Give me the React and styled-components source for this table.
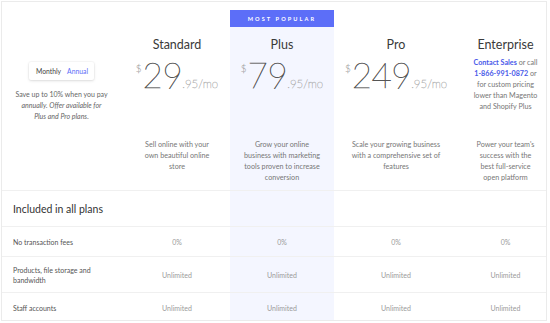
import React from "react";
import styled, { createGlobalStyle, css } from "styled-components";

const Global = createGlobalStyle`
  html, body { margin: 0; padding: 0; background: #fff; }
  body { font-family: Lato, "Open Sans", sans-serif; -webkit-font-smoothing: antialiased; }
`;

const COLS = "122px 106px 104px 124px 1fr";

const Frame = styled.div`
  box-sizing: border-box;
  width: 546px;
  height: 320px;
  margin: 1px 0 0 1px;
  border: 1px solid #ebebeb;
  padding-top: 8px;
  overflow: hidden;
`;

const Row = styled.div`
  display: grid;
  grid-template-columns: ${COLS};
  height: ${(p) => p.$h}px;
  border-bottom: 1px solid #f0f0f0;
  box-sizing: border-box;
`;

const Cell = styled.div`
  display: flex;
  align-items: center;
  justify-content: center;
  text-align: center;
  font-size: 7px;
  color: #9a9a9a;
  ${(p) => p.$hl && css`background: #f4f6ff;`}
  ${(p) => p.$last && css`padding-left: 7px;`}
`;

const LabelCell = styled.div`
  display: flex;
  align-items: center;
  padding-left: 11px;
  font-size: 7px;
  line-height: 10px;
  color: #555;
`;

const LabelText = styled.span`
  max-width: ${(p) => p.$w || 200}px;
`;

const SectionTitle = styled.div`
  display: flex;
  align-items: center;
  padding-left: 11px;
  font-size: 10.5px;
  color: #333;
`;

const IntroCell = styled.div`
  display: flex;
  flex-direction: column;
  align-items: center;
  padding-top: 52px;
  padding-right: 3px;
`;

const Toggle = styled.div`
  display: flex;
  align-items: center;
  gap: 6px;
  height: 18px;
  padding: 0 6px 0 7px;
  background: #fff;
  border-radius: 2px;
  box-shadow: 0 1px 3px rgba(0, 0, 0, 0.12), 0 0 0 1px rgba(0, 0, 0, 0.025);
  font-size: 6.8px;
`;

const ToggleOpt = styled.span`
  color: ${(p) => (p.$active ? "#5c6ef8" : "#444")};
`;

const IntroText = styled.p`
  margin: 9px 0 0;
  font-size: 7px;
  line-height: 11px;
  color: #666;
  text-align: center;
  em { font-style: italic; }
`;

const PlanCell = styled.div`
  display: flex;
  flex-direction: column;
  align-items: center;
  text-align: center;
  ${(p) => p.$hl && css`background: #f4f6ff;`}
  ${(p) => p.$last && css`padding-left: 7px;`}
`;

const BadgeSlot = styled.div`
  height: 17px;
  align-self: stretch;
  display: flex;
  align-items: center;
  justify-content: center;
  background: ${(p) => (p.$on ? "#5c6ef8" : "transparent")};
`;

const Badge = styled.span`
  color: #fff;
  font-size: 5.6px;
  font-weight: 700;
  letter-spacing: 2.1px;
`;

const PlanName = styled.div`
  margin-top: 10px;
  font-size: 12.5px;
  line-height: 16px;
  color: #3a3a3a;
`;

const PriceArea = styled.div`
  height: 86px;
  padding-top: 4px;
  box-sizing: border-box;
`;

const Price = styled.div`
  display: flex;
  align-items: flex-start;
`;

const Dollar = styled.span`
  font-size: 10px;
  font-weight: 100;
  -webkit-text-stroke: 0.3px #999;
  line-height: 1;
  margin-top: 6px;
  margin-right: 1px;
  color: #999;
`;

const Amount = styled.span`
  font-size: 35px;
  font-weight: 100;
  -webkit-text-stroke: 0.45px #555;
  line-height: 34px;
  letter-spacing: -0.5px;
  color: #555;
`;

const Cents = styled.span`
  align-self: flex-end;
  font-size: 11.5px;
  font-weight: 100;
  -webkit-text-stroke: 0.35px #aaa;
  line-height: 1;
  margin-bottom: 2px;
  color: #aaa;
`;

const Contact = styled.p`
  margin: 0;
  font-size: 7.2px;
  line-height: 11px;
  color: #777;
  a { color: #4959e9; font-weight: 700; text-decoration: none; }
`;

const Desc = styled.p`
  margin: 0;
  font-size: 7.2px;
  line-height: 11px;
  color: #777;
  max-width: ${(p) => p.$w || 90}px;
`;

const plans = [
  { name: "Standard", amt: "29", desc: "Sell online with your own beautiful online store", w: 78 },
  { name: "Plus", amt: "79", hl: true, desc: "Grow your online business with marketing tools proven to increase conversion", w: 80 },
  { name: "Pro", amt: "249", desc: "Scale your growing business with a comprehensive set of features", w: 100 },
  {
    name: "Enterprise",
    enterprise: true,
    last: true,
    desc: "Power your team's success with the best full-service open platform",
    w: 66,
  },
];

const features = [
  { label: "No transaction fees", value: "0%", h: 30 },
  { label: "Products, file storage and bandwidth", value: "Unlimited", h: 36, wrap: 86 },
  { label: "Staff accounts", value: "Unlimited", h: 30 },
];

export default function App() {
  return (
    <>
      <Global />
      <Frame>
        <Row $h={181}>
          <IntroCell>
            <Toggle>
              <ToggleOpt>Monthly</ToggleOpt>
              <ToggleOpt $active>Annual</ToggleOpt>
            </Toggle>
            <IntroText>
              Save up to 10% when you pay
              <br />
              <em>annually. Offer available for</em>
              <br />
              <em>Plus and Pro plans.</em>
            </IntroText>
          </IntroCell>
          {plans.map((p) => (
            <PlanCell key={p.name} $hl={p.hl} $last={p.last}>
              <BadgeSlot $on={p.hl}>{p.hl && <Badge>MOST POPULAR</Badge>}</BadgeSlot>
              <PlanName>{p.name}</PlanName>
              <PriceArea>
                {p.enterprise ? (
                  <Contact>
                    <a>Contact Sales</a> or call
                    <br />
                    <a>1-866-991-0872</a> or
                    <br />
                    for custom pricing
                    <br />
                    lower than Magento
                    <br />
                    and Shopify Plus
                  </Contact>
                ) : (
                  <Price>
                    <Dollar>$</Dollar>
                    <Amount>{p.amt}</Amount>
                    <Cents>.95/mo</Cents>
                  </Price>
                )}
              </PriceArea>
              <Desc $w={p.w}>{p.desc}</Desc>
            </PlanCell>
          ))}
        </Row>
        <Row $h={36}>
          <SectionTitle>Included in all plans</SectionTitle>
          <Cell />
          <Cell $hl />
          <Cell />
          <Cell $last />
        </Row>
        {features.map((f) => (
          <Row key={f.label} $h={f.h}>
            <LabelCell>
              <LabelText $w={f.wrap}>{f.label}</LabelText>
            </LabelCell>
            <Cell>{f.value}</Cell>
            <Cell $hl>{f.value}</Cell>
            <Cell>{f.value}</Cell>
            <Cell $last>{f.value}</Cell>
          </Row>
        ))}
      </Frame>
    </>
  );
}
